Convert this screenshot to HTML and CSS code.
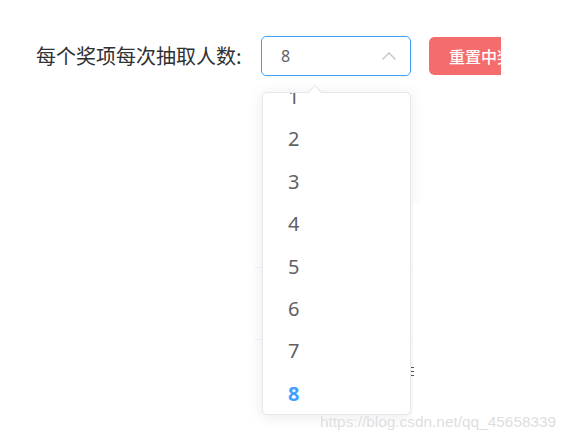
FILE: index.html
```html
<!DOCTYPE html>
<html lang="zh">
<head>
<meta charset="utf-8">
<title>抽奖设置</title>
<link rel="stylesheet" href="styles.css">
</head>
<body>
<div class="page">
  <div class="row">
    <div class="label">每个奖项每次抽取人数:</div>
    <div class="select">
      <span class="value">8</span>
      <svg class="arrow" width="16" height="10" viewBox="0 0 16 10"><path d="M1.5 8.5 L8 2 L14.5 8.5" fill="none" stroke="#c0c4cc" stroke-width="1.4"/></svg>
    </div>
    <div class="btn-clip">
      <button class="btn">重置中奖名单</button>
    </div>
  </div>

  <div class="shadow"></div>
  <div class="cover"></div>
  <div class="tline tline-a"></div>
  <div class="tline tline-b"></div>
  <div class="frag"><i></i><i></i><i></i></div>

  <div class="pop-arrow"></div>
  <div class="dropdown">
    <ul class="list">
      <li>1</li>
      <li>2</li>
      <li>3</li>
      <li>4</li>
      <li>5</li>
      <li>6</li>
      <li>7</li>
      <li class="selected">8</li>
    </ul>
  </div>

  <div class="watermark">https://blog.csdn.net/qq_45658339</div>
</div>
</body>
</html>
```

FILE: styles.css
```css
html, body {
  margin: 0;
  padding: 0;
  background: #fff;
}
body {
  width: 573px;
  height: 441px;
  overflow: hidden;
  font-family: "Noto Sans", "Noto Sans CJK SC", sans-serif;
}
.page {
  position: relative;
  width: 573px;
  height: 441px;
}
.row {
  display: flex;
  align-items: center;
  padding: 36px 0 0 36px;
}
.label {
  width: 225px;
  font-family: "Noto Sans CJK SC", sans-serif;
  font-size: 20px;
  color: #303133;
  line-height: 40px;
  white-space: nowrap;
}
.select {
  box-sizing: border-box;
  width: 150px;
  height: 40px;
  border: 1px solid #409eff;
  border-radius: 5px;
  display: flex;
  align-items: center;
  justify-content: space-between;
  padding: 0 13px 0 19px;
}
.value {
  font-size: 16px;
  color: #606266;
}
.arrow {
  display: block;
}
.btn-clip {
  margin-left: 18px;
  width: 72px;
  height: 38px;
  overflow: hidden;
  border-radius: 5px 0 0 5px;
}
.btn {
  height: 38px;
  border: none;
  background: #f56c6c;
  color: #fff;
  padding: 0 20px;
  font-family: "Noto Sans CJK SC", sans-serif;
  font-size: 16px;
  font-weight: 500;
  white-space: nowrap;
  border-radius: 5px;
}
.shadow {
  position: absolute;
  left: 262px;
  top: 92px;
  width: 148px;
  height: 322px;
  border-radius: 5px;
  box-shadow: 0 2px 14px 2px rgba(0, 0, 0, 0.07);
  z-index: 1;
}
.cover {
  position: absolute;
  left: 413px;
  top: 203px;
  width: 160px;
  height: 238px;
  background: #fff;
  z-index: 2;
}
.tline {
  position: absolute;
  left: 255px;
  width: 158px;
  height: 1px;
  background: #ebeef5;
  z-index: 2;
}
.tline-a { top: 267px; }
.tline-b { top: 339px; }
.frag {
  position: absolute;
  left: 411px;
  top: 367px;
  width: 3px;
  z-index: 2;
}
.frag i {
  display: block;
  height: 1px;
  background: #555;
  margin-bottom: 3px;
}
.dropdown {
  position: absolute;
  left: 262px;
  top: 92px;
  box-sizing: border-box;
  width: 149px;
  height: 323px;
  border: 1px solid #e4e7ed;
  border-radius: 5px;
  background: #fff;
  overflow: hidden;
  z-index: 3;
}
.list {
  list-style: none;
  margin: -17px 0 0 0;
  padding: 0;
}
.list li {
  height: 42.4px;
  line-height: 42.4px;
  padding-left: 25px;
  font-size: 20px;
  color: #606266;
}
.list li.selected {
  color: #409eff;
  font-weight: 700;
}
.pop-arrow {
  position: absolute;
  left: 308px;
  top: 85px;
  width: 0;
  height: 0;
  border-left: 7px solid transparent;
  border-right: 7px solid transparent;
  border-bottom: 7px solid #e4e7ed;
  z-index: 4;
}
.pop-arrow::after {
  content: "";
  position: absolute;
  left: -6px;
  top: 1px;
  border-left: 6px solid transparent;
  border-right: 6px solid transparent;
  border-bottom: 7px solid #fff;
}
.watermark {
  position: absolute;
  left: 320px;
  top: 413px;
  font-family: "Liberation Sans", Arial, sans-serif;
  font-size: 15.4px;
  color: #dedede;
  text-shadow: 0 0 1px #fff;
  z-index: 5;
  white-space: nowrap;
}
```
